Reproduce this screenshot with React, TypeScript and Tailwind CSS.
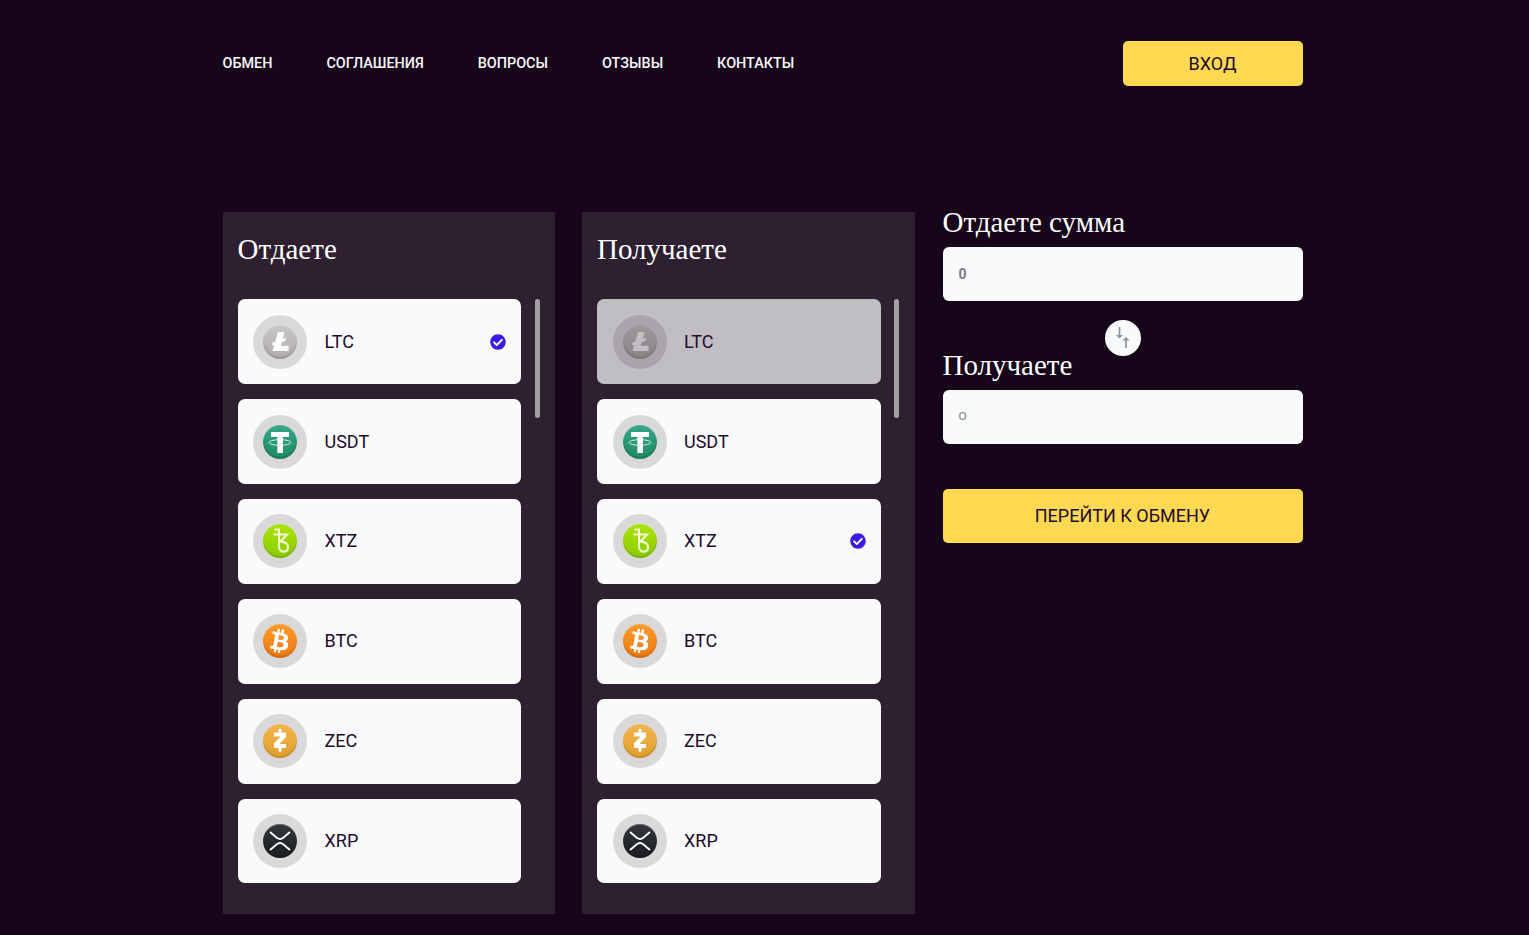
import React from "react";
import { FaBtc, FaCheckCircle } from "react-icons/fa";

const roboto = "font-['Roboto',sans-serif]";
const serif = "font-['Liberation_Serif',serif]";

function Coin({ from, to, children }: { from: string; to: string; children: React.ReactNode }) {
  return (
    <div className="flex h-[54px] w-[54px] shrink-0 items-center justify-center rounded-full bg-[#d9d9d9]">
      <div
        className="flex h-[34px] w-[34px] items-center justify-center rounded-full shadow-[inset_0_-2px_2px_rgba(0,0,0,0.14),inset_0_1px_1px_rgba(255,255,255,0.18)]"
        style={{ background: `linear-gradient(180deg, ${from}, ${to})` }}
      >
        {children}
      </div>
    </div>
  );
}

const icons: Record<string, React.ReactNode> = {
  LTC: (
    <Coin from="#cbc8c8" to="#aeaaaa">
      <svg viewBox="0 0 34 34" className="h-[34px] w-[34px]">
        <path d="M15 7h6.500l-1.800 7 3.500-1.400-.9 3.200-3.500 1.400-1 3.600h8L25.500 26H9.500l1.900-6.500-2.600 1 .7-2.900 2.700-1z" fill="#fdfcfc" />
      </svg>
    </Coin>
  ),
  USDT: (
    <Coin from="#36a583" to="#1f8a68">
      <svg viewBox="0 0 34 34" className="h-[34px] w-[34px]">
        <path d="M8 7h18v5h-6v16h-5.600V12H8z" fill="#fff" />
        <ellipse cx="17" cy="17.500" rx="11" ry="2.800" fill="none" stroke="#fff" strokeWidth="1" opacity=".8" />
      </svg>
    </Coin>
  ),
  XTZ: (
    <Coin from="#a9e400" to="#8ccb05">
      <svg viewBox="0 0 34 34" className="h-[34px] w-[34px]" fill="none" stroke="#f6fcdc" strokeWidth="2">
        <path d="M11.500 5.500h4.500V23c0 3 2.500 5 5 4.700 2.500-.3 4-2 4-4.200 0-3.500-3.200-5.700-7.500-6L24 10.500H10.500" />
      </svg>
    </Coin>
  ),
  BTC: (
    <Coin from="#fb9a2b" to="#ee7a10">
      <FaBtc className="h-[24px] w-[24px] rotate-[10deg] text-white" />
    </Coin>
  ),
  ZEC: (
    <Coin from="#f0b44c" to="#e29f31">
      <svg viewBox="0 0 34 34" className="h-[34px] w-[34px]">
        <path d="M15.500 5h3v3.500h4.500v4.500L16.500 20H23v4h-4.500v3.500h-3V24H11v-4.500L17.500 12.500H11v-4h4.500z" fill="#fff" />
      </svg>
    </Coin>
  ),
  XRP: (
    <Coin from="#33373b" to="#1b1d20">
      <svg viewBox="0 0 34 34" className="h-[34px] w-[34px]" fill="none" stroke="#fff" strokeWidth="1.900">
        <path d="M7 8 13.500 13.500c2.100 1.700 5 1.700 7 0L27 8" />
        <path d="M7 26 13.500 20.500c2.100-1.700 5-1.700 7 0L27 26" />
      </svg>
    </Coin>
  ),
};

const coins = ["LTC", "USDT", "XTZ", "BTC", "ZEC", "XRP"];

function Panel({ title, checked, disabled }: { title: string; checked: string; disabled?: string }) {
  return (
    <section className="flex h-[702px] w-[332.500px] flex-col bg-[#2e2030] pl-[15px]">
      <h2 className={`${serif} mt-[22px] h-[65px] text-[29px] leading-[31px] text-white`}>{title}</h2>
      <div className="flex gap-[13.500px]">
        <div className="flex w-[283.500px] flex-col gap-[15px]">
          {coins.map((c, i) => (
            <div
              key={c}
              className={`flex h-[85px] items-center rounded-[7px] bg-[#f9fafc] pl-[15.500px] pr-[15px] last:h-[84px] ${i > 1 ? "pb-px" : ""} ${disabled === c ? "opacity-[0.72]" : ""}`}
            >
              {icons[c]}
              <span className={`ml-[17.500px] flex-1 text-[18px] text-[#1e0b2c] ${i > 1 && i < 5 ? "pb-[2px]" : ""}`}>{c}</span>
              {checked === c && <FaCheckCircle className="h-4 w-4 text-[#3d19e6]" />}
            </div>
          ))}
        </div>
        <div className="h-[119px] w-[5px] rounded-[3px] bg-[#a3a0a4]" />
      </div>
    </section>
  );
}

export default function App() {
  return (
    <div className={`${roboto} min-h-[935px] bg-[#170619] pr-[4px]`}>
      <div className="mx-auto w-[1080px]">
        <header className="flex h-[212px] items-start justify-between pt-[41px]">
          <nav className="flex h-[45px] items-center gap-[54px] text-[14.400px] font-medium text-[#f8f9fb]">
            <a>ОБМЕН</a>
            <a>СОГЛАШЕНИЯ</a>
            <a>ВОПРОСЫ</a>
            <a>ОТЗЫВЫ</a>
            <a>КОНТАКТЫ</a>
          </nav>
          <button className="h-[45px] w-[180px] rounded-[5px] bg-[#ffd952] text-[18px] text-[#1e0b2c]">ВХОД</button>
        </header>
        <main className="flex items-start">
          <Panel title="Отдаете" checked="LTC" />
          <div className="w-[27px]" />
          <Panel title="Получаете" checked="XTZ" disabled="LTC" />
          <div className="relative ml-[28px] flex w-[360px] flex-col">
            <label className={`${serif} -mt-[5px] h-[40px] text-[29px] leading-[31px] text-white`}>Отдаете сумма</label>
            <input
              readOnly
              placeholder="0"
              className="h-[54px] rounded-[6px] bg-[#f9fafc] px-4 text-[14px] font-bold outline-none placeholder:text-[#7d7d7d]"
            />
            <div className="absolute left-[162px] top-[108px] flex h-9 w-9 items-center justify-center rounded-full bg-[#f9fafc]">
              <svg viewBox="0 0 36 36" className="h-9 w-9" fill="none" stroke="#8696a5" strokeWidth="1.700">
                <path d="M14.500 7v8.500" />
                <path d="M10.800 15h7.400l-3.700 3.500z" fill="#8696a5" stroke="none" />
                <path d="M21 28v-8" />
                <path d="M17.300 20.500h7.400L21 17z" fill="#8696a5" stroke="none" />
              </svg>
            </div>
            <label className={`${serif} mt-[49px] h-[40px] text-[29px] leading-[31px] text-white`}>Получаете</label>
            <input
              readOnly
              placeholder="0"
              className="h-[54px] rounded-[6px] bg-[#f9fafc] px-4 pb-[7px] font-['Open_Sans',sans-serif] text-[15px] oldstyle-nums outline-none placeholder:text-[#8a8a8a]"
            />
            <button className="mt-[45px] h-[54px] rounded-[5px] bg-[#ffd952] pb-px text-[18px] text-[#1e0b2c]">ПЕРЕЙТИ К ОБМЕНУ</button>
          </div>
        </main>
      </div>
    </div>
  );
}
